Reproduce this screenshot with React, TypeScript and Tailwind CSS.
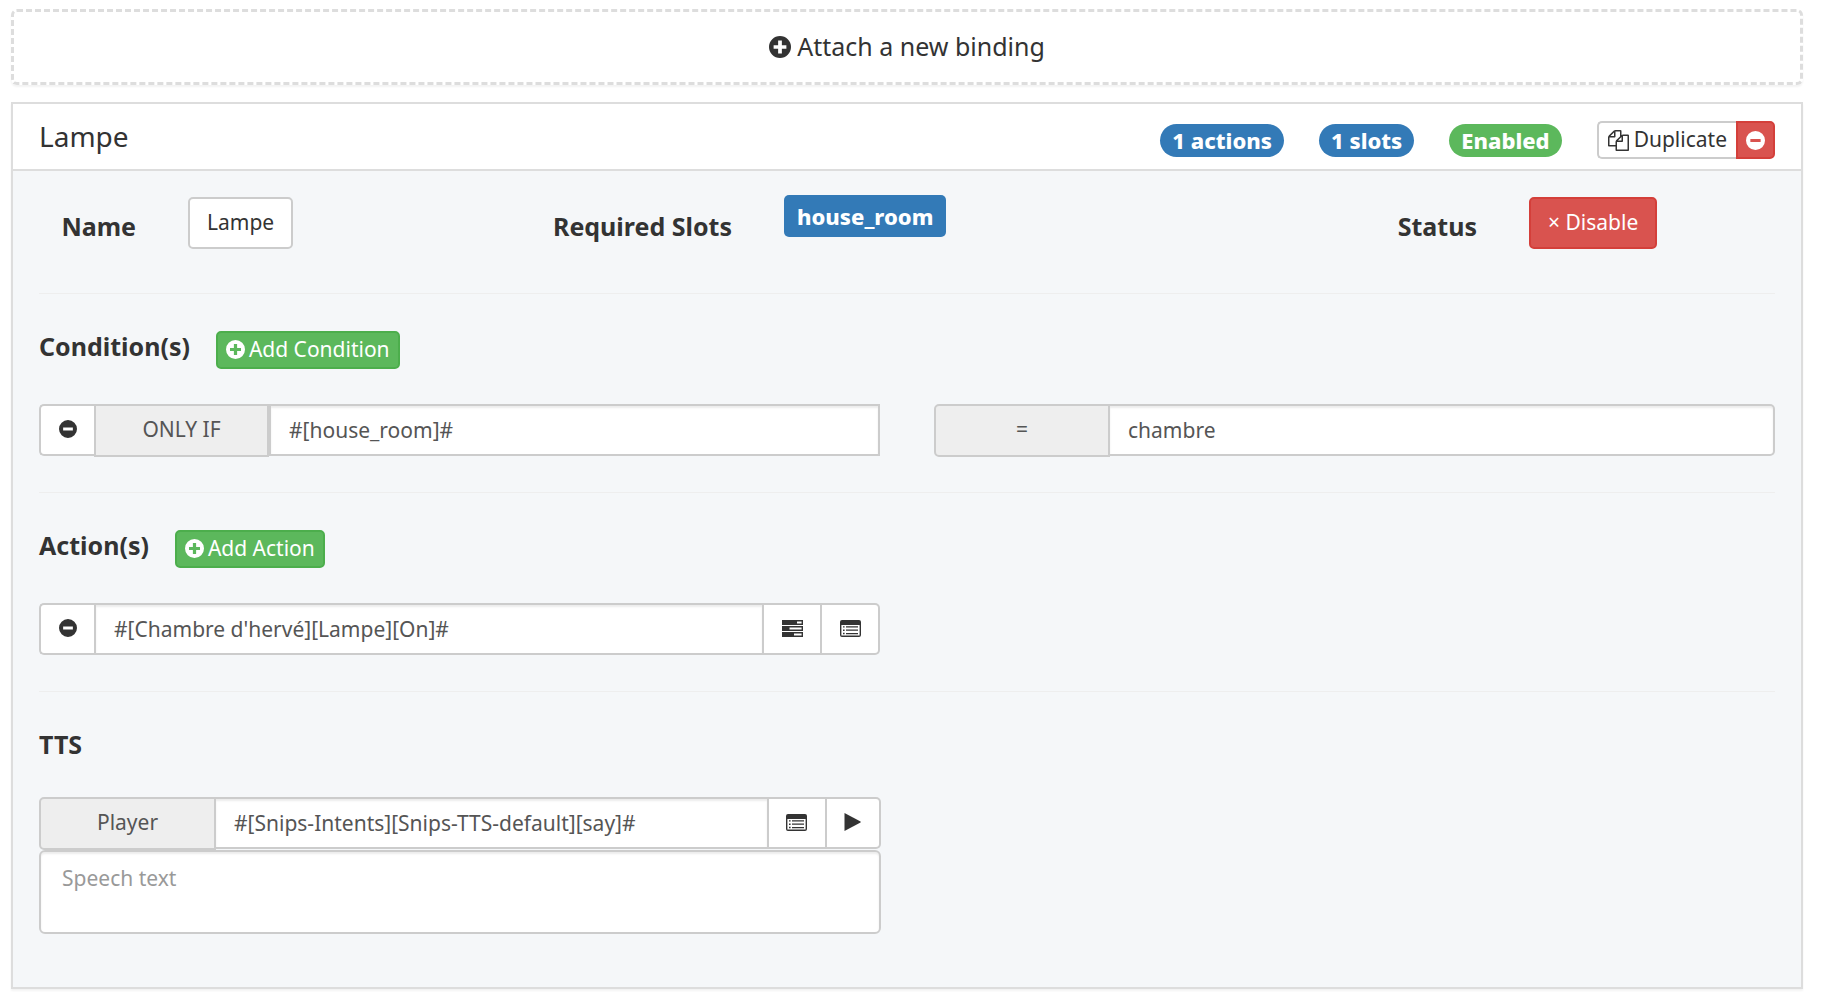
import type { ReactNode } from "react";

const PlusIcon = ({ className }: { className: string }) => (
  <svg viewBox="0 0 20 20" className={className} fill="currentColor" aria-hidden="true">
    <path
      fillRule="evenodd"
      d="M10 0a10 10 0 1 0 0 20a10 10 0 0 0 0-20zM8.3 4.2h3.4v4.1h4.1v3.4h-4.1v4.1H8.3v-4.1H4.2V8.3h4.1z"
    />
  </svg>
);

const MinusIcon = ({ className }: { className: string }) => (
  <svg viewBox="0 0 20 20" className={className} fill="currentColor" aria-hidden="true">
    <path fillRule="evenodd" d="M10 0a10 10 0 1 0 0 20a10 10 0 0 0 0-20zM4.6 8.3h10.8v3.4H4.6z" />
  </svg>
);

const CopyIcon = () => (
  <svg viewBox="0 0 1792 1792" className="size-[21px]" fill="currentColor" aria-hidden="true">
    <path d="M1696 384q40 0 68 28t28 68v1216q0 40-28 68t-68 28h-960q-40 0-68-28t-28-68v-288h-544q-40 0-68-28t-28-68v-672q0-40 20-88t48-76l408-408q28-28 76-48t88-20h416q40 0 68 28t28 68v328q68-40 128-40h416zm-544 213l-299 299h299v-299zm-640-384l-299 299h299v-299zm196 647l316-316v-416h-384v416q0 40-28 68t-68 28h-416v640h512v-256q0-40 20-88t48-76zm956 804v-1152h-384v416q0 40-28 68t-68 28h-416v640h896z" />
  </svg>
);

const TasksIcon = () => (
  <svg viewBox="0 0 21 17" className="h-[17px] w-[21px]" fill="currentColor" aria-hidden="true">
    <path
      fillRule="evenodd"
      d="M0 0h21v5H0zM15 1.6v1.8h4.6V1.6zM0 6h21v5H0zM7.5 7.6v1.8h12.1V7.6zM0 12h21v5H0zM12 13.6v1.8h7.6v-1.8z"
    />
  </svg>
);

const ListIcon = () => (
  <svg viewBox="0 0 21 17" className="h-[17px] w-[21px]" fill="currentColor" aria-hidden="true">
    <path
      fillRule="evenodd"
      d="M2 0h17a2 2 0 0 1 2 2v13a2 2 0 0 1-2 2H2a2 2 0 0 1-2-2V2a2 2 0 0 1 2-2zM1.4 5v10.6h18.2V5z"
    />
    <path d="M3 6.2h1.6v1.4H3zM6 6.2h12v1.2H6zM3 9.5h1.6v1.4H3zM6 9.6h12v1.2H6zM3 12.8h1.6v1.4H3zM6 13h12v1.2H6z" />
  </svg>
);

const PlayIcon = () => (
  <svg viewBox="0 0 17 18" className="h-[18px] w-[17px]" fill="currentColor" aria-hidden="true">
    <path d="M.5 0L16.5 8.6a.5.5 0 0 1 0 .8L.5 18z" />
  </svg>
);

const Badge = ({ className, children }: { className: string; children: ReactNode }) => (
  <span
    className={`flex h-[33px] items-center rounded-full px-[12px] text-[22px] font-extrabold text-white ${className}`}
  >
    {children}
  </span>
);

const Addon = ({ className, children }: { className: string; children: ReactNode }) => (
  <span
    className={`flex h-[53px] shrink-0 items-center justify-center border-2 border-[#cccccc] bg-[#eeeeee] pb-[2px] text-[#555555] ${className}`}
  >
    {children}
  </span>
);

const IconButton = ({ label, className, children }: { label: string; className: string; children: ReactNode }) => (
  <button
    type="button"
    aria-label={label}
    className={`flex h-[52px] shrink-0 items-center justify-center border-2 border-[#cccccc] bg-white pb-[2px] ${className}`}
  >
    {children}
  </button>
);

const Field = ({ label, value, className }: { label: string; value: string; className: string }) => (
  <input
    type="text"
    aria-label={label}
    defaultValue={value}
    className={`h-[52px] min-w-0 flex-1 border-2 border-[#cccccc] bg-white px-[18px] text-[#555555] shadow-[inset_0_2px_2px_rgba(0,0,0,0.075)] outline-none ${className}`}
  />
);

const AddButton = ({ children }: { children: ReactNode }) => (
  <button
    type="button"
    className="flex h-[38px] items-center gap-[4px] rounded-[5px] border-2 border-[#4cae4c] bg-[#5cb85c] px-[8px] pb-px text-white"
  >
    <PlusIcon className="size-[19px]" />
    {children}
  </button>
);

const Label = ({ className, children }: { className: string; children: ReactNode }) => (
  <span className={`pt-[14px] pr-[26px] text-right text-[25px] leading-[34px] font-bold ${className}`}>{children}</span>
);

const Section = ({ title, action, children }: { title: string; action?: ReactNode; children: ReactNode }) => (
  <section className="border-t border-[#eeeeee] pt-[37px]">
    <div className="mb-[35px] flex h-[38px] items-start gap-[26px]">
      <h2 className="text-[25px] leading-[30px] font-bold">{title}</h2>
      {action}
    </div>
    <div className="mb-[35px] grid grid-cols-2 gap-[54px]">{children}</div>
  </section>
);

const App = () => {
  return (
    <main className="bg-white pt-[9px] pr-[29px] pb-4 pl-[11px] font-['Noto_Sans','Open_Sans',sans-serif] text-[21px] text-[#333333]">
      <button
        type="button"
        className="flex h-[76px] w-full items-center justify-center gap-[6px] rounded-[6px] border-3 border-dashed border-[#dddddd] text-[25px] shadow-[0_2px_2px_rgba(0,0,0,0.05)]"
      >
        <PlusIcon className="size-[22px]" />
        Attach a new binding
      </button>

      <div className="mt-[17px] border-2 border-[#dddddd] bg-[#f5f7f9] shadow-[0_2px_2px_rgba(0,0,0,0.05)]">
        <header className="flex h-[67px] items-center justify-between border-b-2 border-[#dddddd] bg-white px-[26px]">
          <h1 className="pb-px text-[28px]">Lampe</h1>
          <div className="flex items-center gap-[35px] pt-[7px]">
            <Badge className="bg-[#337ab7]">1 actions</Badge>
            <Badge className="bg-[#337ab7]">1 slots</Badge>
            <Badge className="bg-[#5cb85c]">Enabled</Badge>
            <div className="flex">
              <button
                type="button"
                className="flex h-[38px] items-center gap-[5px] rounded-l-[5px] border-2 border-r-0 border-[#cccccc] bg-white px-[9px]"
              >
                <CopyIcon />
                Duplicate
              </button>
              <button
                type="button"
                aria-label="Remove binding"
                className="flex h-[38px] w-[39px] items-center justify-center rounded-r-[5px] border-2 border-[#d43f3a] bg-[#d9534f] text-white"
              >
                <MinusIcon className="size-[19px]" />
              </button>
            </div>
          </div>
        </header>

        <div className="px-[26px] pt-[24px] pb-[53px]">
          <div className="-mx-[26px] grid h-[98px] grid-cols-12 items-start">
            <Label className="col-span-1">Name</Label>
            <div className="col-span-2 px-[26px] pt-[2px]">
              <button type="button" className="h-[52px] rounded-[5px] border-2 border-[#cccccc] bg-white px-[17px]">
                Lampe
              </button>
            </div>
            <Label className="col-span-2">Required Slots</Label>
            <div className="col-span-3 flex px-[26px]">
              <span className="flex h-[42px] items-center rounded-[5px] bg-[#337ab7] px-[13px] text-[22px] font-extrabold text-white">
                house_room
              </span>
            </div>
            <Label className="col-span-2">Status</Label>
            <div className="col-span-2 px-[26px] pt-[2px]">
              <button
                type="button"
                className="h-[52px] rounded-[5px] border-2 border-[#d43f3a] bg-[#d9534f] px-[17px] text-white"
              >
                × Disable
              </button>
            </div>
          </div>

          <Section title="Condition(s)" action={<AddButton>Add Condition</AddButton>}>
            <div className="flex h-[53px] items-start">
              <IconButton label="Remove condition" className="w-[55px] rounded-l-[5px] border-r-0">
                <MinusIcon className="size-[18px]" />
              </IconButton>
              <Addon className="w-[175px]">ONLY IF</Addon>
              <Field label="Condition slot" value="#[house_room]#" className="" />
            </div>
            <div className="flex h-[53px] items-start">
              <Addon className="w-[176px] rounded-l-[5px]">=</Addon>
              <Field label="Condition value" value="chambre" className="rounded-r-[5px] border-l-0" />
            </div>
          </Section>

          <Section title="Action(s)" action={<AddButton>Add Action</AddButton>}>
            <div className="flex h-[53px] items-start">
              <IconButton label="Remove action" className="w-[55px] rounded-l-[5px] border-r-0">
                <MinusIcon className="size-[18px]" />
              </IconButton>
              <Field label="Action command" value="#[Chambre d'hervé][Lampe][On]#" className="" />
              <IconButton label="Select scenario" className="w-[58px] border-l-0">
                <TasksIcon />
              </IconButton>
              <IconButton label="Select command" className="w-[58px] rounded-r-[5px] border-l-0">
                <ListIcon />
              </IconButton>
            </div>
          </Section>

          <section className="border-t border-[#eeeeee] pt-[35px]">
            <h2 className="mb-[36px] text-[25px] leading-[34px] font-bold">TTS</h2>
            <div className="grid grid-cols-2 gap-[53px]">
              <div>
                <div className="flex h-[53px] items-start">
                  <Addon className="w-[177px] rounded-l-[5px]">Player</Addon>
                  <Field
                    label="Player command"
                    value="#[Snips-Intents][Snips-TTS-default][say]#"
                    className="border-l-0"
                  />
                  <IconButton label="Select player" className="w-[58px] border-l-0">
                    <ListIcon />
                  </IconButton>
                  <IconButton label="Play" className="w-[54px] rounded-r-[5px] border-l-0">
                    <PlayIcon />
                  </IconButton>
                </div>
                <textarea
                  aria-label="Speech text"
                  placeholder="Speech text"
                  className="block h-[84px] w-full resize-none rounded-[6px] border-2 border-[#cccccc] bg-white px-[21px] py-[11px] leading-[30px] text-[#555555] shadow-[inset_0_2px_2px_rgba(0,0,0,0.075)] outline-none placeholder:text-[#999999]"
                />
              </div>
            </div>
          </section>
        </div>
      </div>
    </main>
  );
};

export default App;
